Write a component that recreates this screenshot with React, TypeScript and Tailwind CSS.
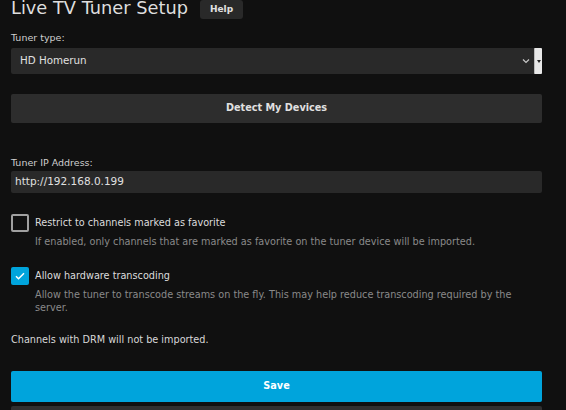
import React, { useState } from 'react';

const CheckRow = ({
  checked,
  label,
  help,
  onToggle,
}: {
  checked: boolean;
  label: string;
  help: React.ReactNode;
  onToggle: () => void;
}) => (
  <div className="flex gap-[6px]">
    <button
      onClick={onToggle}
      className={
        checked
          ? 'flex h-[18px] w-[18px] shrink-0 items-center justify-center rounded-[2px] bg-[#00a4dc]'
          : 'h-[18px] w-[18px] shrink-0 rounded-[2px] border-2 border-[#a0a0a0]'
      }
    >
      {checked && (
        <svg width="12" height="12" viewBox="0 0 24 24" fill="none" stroke="#fff" strokeWidth="3">
          <path d="M4 12.5l5 5L20 6.5" />
        </svg>
      )}
    </button>
    <div>
      <div className="pt-[2px] text-[9.7px] leading-[14px] text-[#dcdcdc]">{label}</div>
      <div className="mt-[5px] text-[9.7px] leading-[13px] text-[#8a8a8a]">{help}</div>
    </div>
  </div>
);

export default function App() {
  const [favOnly, setFavOnly] = useState(false);
  const [hwTranscode, setHwTranscode] = useState(true);

  return (
    <div className="h-screen overflow-hidden bg-[#101010] pl-[11px] pr-[24px] font-['DejaVu_Sans',sans-serif]">
      <div className="-mt-[5px] flex items-center gap-[12px]">
        <h1 className="text-[17.8px] font-normal leading-[26px] text-[#dedede]">Live TV Tuner Setup</h1>
        <button className="mt-[3px] h-[19px] w-[43px] rounded-[3px] bg-[#292929] text-[9px] font-bold text-[#e0e0e0]">
          Help
        </button>
      </div>

      <div className="mt-[11px] text-[9.5px] leading-[12px] text-[#cfcfcf]">Tuner type:</div>
      <div className="mt-[4px] flex h-[26px] items-center rounded-[2px] bg-[#292929] pl-[9px]">
        <span className="flex-1 text-[10.3px] text-[#e0e0e0]">HD Homerun</span>
        <svg width="8" height="6" viewBox="0 0 8 6" className="mr-[4px]">
          <path d="M1 1.5l3 3 3-3" stroke="#c8c8c8" strokeWidth="1.2" fill="none" />
        </svg>
        <div className="flex h-[26px] w-[8px] items-center justify-center rounded-[1px] border-l border-[#bbb] bg-[#e8e8e8]">
          <div className="h-0 w-0 border-x-[2.5px] border-t-[3px] border-x-transparent border-t-[#222]" />
        </div>
      </div>

      <button className="mt-[20px] h-[29px] w-full rounded-[2px] bg-[#2d2d2d] text-[9.7px] font-bold text-[#e0e0e0]">
        Detect My Devices
      </button>

      <div className="mt-[34px] text-[9.5px] leading-[12px] text-[#cfcfcf]">Tuner IP Address:</div>
      <div className="mt-[2px] flex h-[22px] items-center rounded-[2px] bg-[#292929] pl-[4px] text-[10.5px] text-[#e0e0e0]">
        http://192.168.0.199
      </div>

      <div className="mt-[21px]">
        <CheckRow
          checked={favOnly}
          onToggle={() => setFavOnly(!favOnly)}
          label="Restrict to channels marked as favorite"
          help="If enabled, only channels that are marked as favorite on the tuner device will be imported."
        />
      </div>
      <div className="mt-[19px]">
        <CheckRow
          checked={hwTranscode}
          onToggle={() => setHwTranscode(!hwTranscode)}
          label="Allow hardware transcoding"
          help={
            <>
              Allow the tuner to transcode streams on the fly. This may help reduce transcoding required by the
              <br />
              server.
            </>
          }
        />
      </div>

      <div className="mt-[19px] text-[9.7px] leading-[14px] text-[#d8d8d8]">Channels with DRM will not be imported.</div>

      <button className="mt-[24px] h-[31px] w-full rounded-[2px] bg-[#00a4dc] text-[9.7px] font-bold text-white">
        Save
      </button>
      <button className="mt-[4px] h-[31px] w-full rounded-[2px] bg-[#303030] text-[9.7px] font-bold text-[#e0e0e0]">
        Cancel
      </button>
    </div>
  );
}
